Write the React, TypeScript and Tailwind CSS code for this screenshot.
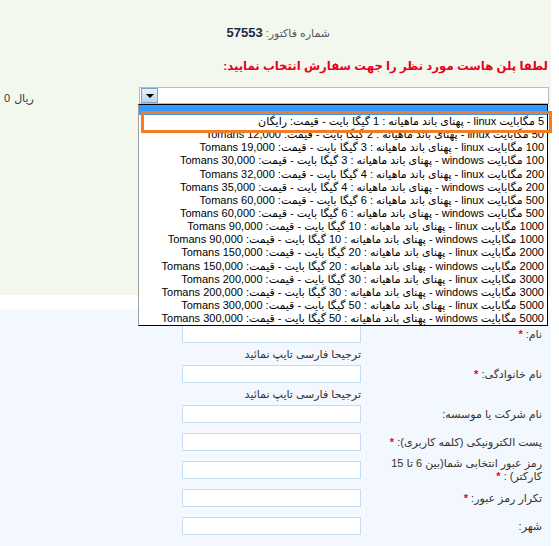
import React from "react"

const plans: [string, string, string, string][] = [
  ["5", "linux", "1", "رایگان"],
  ["50", "linux", "2", "12,000 Tomans"],
  ["100", "linux", "3", "19,000 Tomans"],
  ["100", "windows", "3", "30,000 Tomans"],
  ["200", "linux", "4", "32,000 Tomans"],
  ["200", "windows", "4", "35,000 Tomans"],
  ["500", "linux", "6", "60,000 Tomans"],
  ["500", "windows", "6", "60,000 Tomans"],
  ["1000", "linux", "10", "90,000 Tomans"],
  ["1000", "windows", "10", "90,000 Tomans"],
  ["2000", "linux", "20", "150,000 Tomans"],
  ["2000", "windows", "20", "150,000 Tomans"],
  ["3000", "linux", "30", "200,000 Tomans"],
  ["3000", "windows", "30", "200,000 Tomans"],
  ["5000", "linux", "50", "300,000 Tomans"],
  ["5000", "windows", "50", "300,000 Tomans"],
]

const hint = "ترجیحا فارسی تایپ نمائید"

const fields = [
  { label: "نام:", required: true, hint: true },
  { label: "نام خانوادگی:", required: true, hint: true },
  { label: "نام شرکت یا موسسه:", required: false, hint: false },
  { label: "پست الکترونیکی (کلمه کاربری):", required: true, hint: false },
  { label: "رمز عبور انتخابی شما(بین 6 تا 15 کارکتر) :", required: true, hint: false },
  { label: "تکرار رمز عبور:", required: true, hint: false },
  { label: "شهر:", required: false, hint: false },
]

function FormRow({ label, required }: { label: string; required: boolean }) {
  return (
    <div className="flex h-[28px] items-center">
      <div className="w-[163px] text-right leading-[13px] text-[#333]">
        {label}
        {required && <span className="font-bold text-[#e8001c]"> *</span>}
      </div>
      <div className="mr-[18px]">
        <input className="block h-[18px] w-[179px] border border-[#c6dcf2] bg-white outline-none" />
      </div>
    </div>
  )
}

export default function App() {
  return (
    <div className="min-h-screen bg-white font-['Liberation_Sans','DejaVu_Sans',sans-serif] text-[11px] text-[#333]">
      <div className="relative w-[551px]">
        <section className="h-[295px] overflow-hidden bg-[#f3f8ef]">
          <div dir="rtl" className="mt-[25px] h-[16px] pr-[221px] leading-[16px] text-[#555]">
            شماره فاکتور: <b className="text-[13px] text-[#1c2a4a]">57553</b>
          </div>
          <div dir="rtl" className="mt-[17px] h-[16px] pr-[3px] text-[11.7px] font-bold leading-[16px] text-[#e8001c]">
            لطفا پلن هاست مورد نظر را جهت سفارش انتخاب نمایید:
          </div>
          <div className="mt-[13px] flex h-[17px] items-center">
            <div className="flex w-[139px] gap-[4px] pl-[4px] pt-[5px] text-[#333]">
              <span>0</span>
              <span>ریال</span>
            </div>
            <div className="flex h-[17px] w-[410px] items-center border border-[#b4bcc6] bg-white">
              <div className="ml-px flex h-[15px] w-[17px] items-center justify-center border border-[#7ea4cc] bg-gradient-to-b from-[#e9f1fa] to-[#bcd5ef]">
                <div className="h-0 w-0 border-x-[4px] border-t-[4px] border-x-transparent border-t-black" />
              </div>
            </div>
          </div>
        </section>
        <div className="h-[14px] bg-white" />
        <section dir="rtl" className="min-h-[237px] bg-[#f2f8fd] pr-[9px] pt-[11px]">
          {fields.map((f) => (
            <div key={f.label}>
              <FormRow label={f.label} required={f.required} />
              {f.hint && (
                <div className="h-[12px] pr-[181px] leading-[12px] text-[#333]">{hint}</div>
              )}
            </div>
          ))}
        </section>

        {/* open dropdown list */}
        <div
          dir="rtl"
          className="absolute left-[138px] top-[104px] w-[410px] border border-l-[#a0a0a0] border-black bg-white text-black"
        >
          <div className="h-[10px] bg-[#3399ff]" />
          {plans.map(([mb, os, gb, price]) => (
            <div key={mb + os} className="h-[13.15px] overflow-hidden whitespace-nowrap pr-[3px] leading-[13px]">
              {mb} مگابایت {os} - پهنای باند ماهیانه : {gb} گیگا بایت - قیمت: {price}
            </div>
          ))}
        </div>

        {/* highlight frame */}
        <div className="pointer-events-none absolute left-[141px] top-[111px] h-[22px] w-[411px] border-[3px] border-[#f57c22]" />
      </div>
    </div>
  )
}
